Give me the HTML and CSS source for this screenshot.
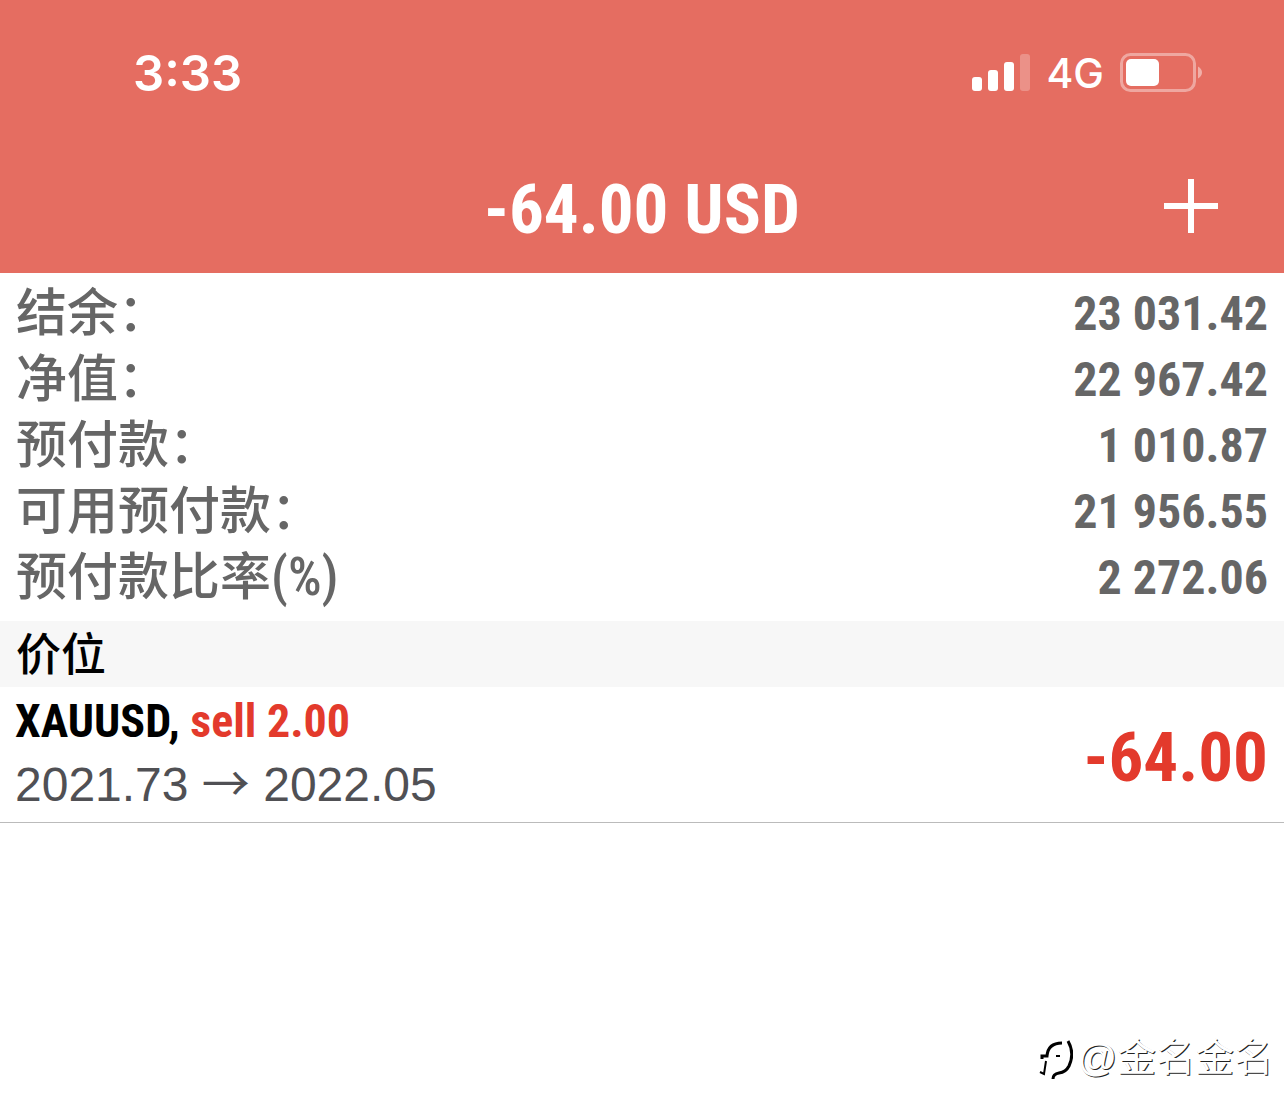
FILE: index.html
```html
<!DOCTYPE html>
<html lang="zh-CN">
<head>
<meta charset="utf-8">
<meta name="viewport" content="width=device-width, initial-scale=1">
<title>-64.00 USD</title>
<link rel="stylesheet" href="styles.css">
</head>
<body>
<header class="header">
  <div class="status">
    <time class="clock">3:33</time>
    <div class="indicators">
      <svg class="signal" width="58" height="38" viewBox="0 0 58 38" fill="#fff" aria-hidden="true">
        <rect x="0" y="23" width="10" height="14" rx="3"/>
        <rect x="16" y="16" width="10" height="21" rx="3"/>
        <rect x="32" y="8" width="10" height="29" rx="3"/>
        <rect x="48" y="0" width="10" height="37" rx="3" opacity=".25"/>
      </svg>
      <span class="network">4G</span>
      <svg class="battery" width="82" height="40" viewBox="0 0 82 40" aria-hidden="true">
        <rect x="1.5" y="1.5" width="73" height="36" rx="9" fill="none" stroke="#fff" stroke-opacity=".4" stroke-width="3"/>
        <rect x="6" y="6" width="33" height="27" rx="5" fill="#fff"/>
        <path d="M78 13.500Q82 16 82 19.500T78 25.500Z" fill="#fff" opacity=".45"/>
      </svg>
    </div>
  </div>
  <div class="titlebar">
    <h1 class="title">-64.00 USD</h1>
    <button class="add" type="button" aria-label="新订单">
      <svg width="54" height="54" viewBox="0 0 54 54" aria-hidden="true"><path d="M27 0V54M0 27H54" stroke="#fff" stroke-width="6"/></svg>
    </button>
  </div>
</header>
<main class="main">
  <dl class="summary">
    <div class="row"><dt>结余：</dt><dd>23 031.42</dd></div>
    <div class="row"><dt>净值：</dt><dd>22 967.42</dd></div>
    <div class="row"><dt>预付款：</dt><dd>1 010.87</dd></div>
    <div class="row"><dt>可用预付款：</dt><dd>21 956.55</dd></div>
    <div class="row"><dt>预付款比率<span class="unit">(%)</span></dt><dd>2 272.06</dd></div>
  </dl>
  <h2 class="section">价位</h2>
  <article class="position">
    <div>
      <div class="order">XAUUSD, <span class="side">sell 2.00</span></div>
      <div class="prices">2021.73 <span class="arrow">→</span> 2022.05</div>
    </div>
    <div class="profit">-64.00</div>
  </article>
</main>
<footer class="credit">
  <svg width="38" height="44" viewBox="0 0 38 44" fill="none" stroke="#000" aria-hidden="true">
    <path d="M7 23V20H12Q13 7 27 7" stroke-width="3"/>
    <path d="M33 5Q40 17 34 30Q31 36 24 37Q18 38 18 43" stroke-width="3"/>
    <path d="M11 25L9 38L5 36M21 20H25" stroke-width="2"/>
  </svg>
  <span>@金名金名</span>
</footer>
</body>
</html>
```
FILE: styles.css
```css
* {
  box-sizing: border-box;
}

body {
  margin: 0;
  min-height: 100vh;
  display: flex;
  flex-direction: column;
  background: #fff;
  color: #000;
  font-family: "Roboto Condensed", "Liberation Sans", "Noto Sans CJK SC", sans-serif;
}

.header {
  background: #e56d61;
  color: #fff;
  padding: 43px 66px 26px;
}

.status {
  display: flex;
  align-items: center;
  justify-content: space-between;
  height: 60px;
  padding: 0 16px 0 67px;
  font-family: Inter, sans-serif;
}

.clock {
  font-size: 49px;
  font-weight: 600;
}

.indicators {
  display: flex;
  align-items: center;
  gap: 16px;
}

.network {
  font-size: 41px;
  font-weight: 500;
}

.titlebar {
  display: grid;
  grid-template-columns: 1fr auto 1fr;
  align-items: center;
  margin-top: 62px;
  height: 82px;
}

.title {
  grid-column: 2;
  margin: 0;
  padding-top: 8px;
  font-size: 69px;
  line-height: 74px;
}

.add {
  justify-self: end;
  display: flex;
  padding: 0;
  border: 0;
  background: none;
}

.main {
  flex: 1;
}

.summary {
  margin: 0;
  padding: 8px 16px 10px;
  color: #666;
}

.row {
  display: flex;
  justify-content: space-between;
  height: 66px;
  line-height: 66px;
}

.row dt {
  font-size: 51px;
  font-weight: 500;
}

.row dd {
  margin: 0;
  font-size: 48px;
  font-weight: 700;
}

.unit {
  font-size: 53px;
  line-height: 1;
}

.section {
  margin: 0;
  padding: 4px 16px 0;
  background: #f7f7f7;
  font-size: 45px;
  font-weight: 500;
  line-height: 62px;
}

.position {
  display: flex;
  align-items: center;
  justify-content: space-between;
  padding: 3px 16px 5px 15px;
  border-bottom: 1px solid #bbb;
}

.order {
  font-size: 46px;
  font-weight: 700;
  line-height: 63px;
}

.side,
.profit {
  color: #e33a2c;
}

.prices {
  color: #505054;
  font-family: "Liberation Sans", sans-serif;
  font-size: 48px;
  line-height: 64px;
}

.arrow {
  font-family: "Noto Sans CJK SC", sans-serif;
  line-height: 1;
}

.profit {
  padding-top: 8px;
  font-size: 69px;
  font-weight: 700;
  line-height: 82px;
}

.credit {
  display: flex;
  align-items: center;
  justify-content: flex-end;
  gap: 4px;
  padding: 0 11px 34px;
  color: #fff;
  font-family: "Liberation Sans", "Noto Sans CJK SC", sans-serif;
  font-size: 39px;
  line-height: 56px;
  text-shadow: 1px 1px 0 #222;
}
```
